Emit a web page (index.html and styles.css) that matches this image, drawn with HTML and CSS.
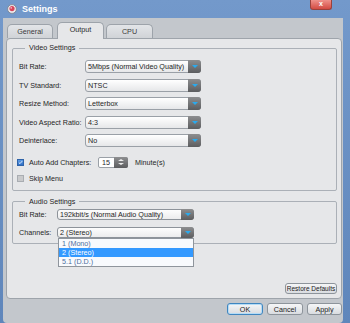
FILE: index.html
```html
<!DOCTYPE html>
<html lang="en">
  <head>
    <meta charset="UTF-8" />
    <title>Settings</title>
    <link rel="stylesheet" href="styles.css">
  </head>
  <body>
    <div class="titlebar">
      <svg class="app-icon" viewBox="0 0 10 10">
        <circle cx="5" cy="5" r="4.4" fill="#ececef" stroke="#7b808a" stroke-width="0.8" />
        <circle cx="5" cy="4.6" r="2.6" fill="#d8445a" />
        <circle cx="4.2" cy="3.8" r="0.9" fill="#f5b6c0" />
      </svg>
      <span class="title">Settings</span>
      <div class="close-btn">x</div>
    </div>

    <div class="window">
      <!-- Pestañas -->
      <div class="tabs">
        <div class="tab first">General</div>
        <div class="tab active">Output</div>
        <div class="tab">CPU</div>
      </div>

      <div class="panel">
        <fieldset class="group">
          <legend>Video Settings</legend>
          <div class="rows">
            <div class="row">
              <span class="label">Bit Rate:</span>
              <div class="combo"><span class="value">5Mbps (Normal Video Quality)</span><span class="drop"></span></div>
            </div>
            <div class="row">
              <span class="label">TV Standard:</span>
              <div class="combo"><span class="value">NTSC</span><span class="drop"></span></div>
            </div>
            <div class="row">
              <span class="label">Resize Method:</span>
              <div class="combo"><span class="value">Letterbox</span><span class="drop"></span></div>
            </div>
            <div class="row">
              <span class="label">Video Aspect Ratio:</span>
              <div class="combo"><span class="value">4:3</span><span class="drop"></span></div>
            </div>
            <div class="row">
              <span class="label">Deinterlace:</span>
              <div class="combo"><span class="value">No</span><span class="drop"></span></div>
            </div>
          </div>
          <div class="row chapters-row">
            <span class="check on">
              <svg viewBox="0 0 7 7"><path d="M1.2 3.6 L2.8 5.1 L5.8 1.6" fill="none" stroke="#fff" stroke-width="1.2" /></svg>
            </span>
            <span class="check-label">Auto Add Chapters:</span>
            <div class="spin">
              <span class="spin-value">15</span>
              <span class="spin-btn"><i class="up"></i><i class="down"></i></span>
            </div>
            <span class="unit">Minute(s)</span>
          </div>
          <div class="row skip-row">
            <span class="check off"></span>
            <span>Skip Menu</span>
          </div>
        </fieldset>

        <fieldset class="group audio">
          <legend>Audio Settings</legend>
          <div class="rows audio-rows">
            <div class="row">
              <span class="label short">Bit Rate:</span>
              <div class="combo light"><span class="value">192kbit/s (Normal Audio Quality)</span><span class="drop"></span></div>
            </div>
            <div class="row">
              <span class="label short">Channels:</span>
              <div class="combo light open">
                <span class="value">2 (Stereo)</span><span class="drop"></span>
                <ul class="dropdown">
                  <li>1 (Mono)</li>
                  <li class="hover">2 (Stereo)</li>
                  <li>5.1 (D.D.)</li>
                </ul>
              </div>
            </div>
          </div>
        </fieldset>

        <div class="panel-foot">
          <button class="btn restore">Restore Defaults</button>
        </div>
      </div>

      <!-- Botones -->
      <div class="footer">
        <button class="btn default">OK</button>
        <button class="btn">Cancel</button>
        <button class="btn apply">Apply</button>
      </div>
    </div>
  </body>
</html>
```

FILE: styles.css
```css
/* General */
* {
  box-sizing: border-box;
}

body {
  margin: 0;
  width: 350px;
  height: 323px;
  overflow: hidden;
  background: linear-gradient(#7399cb, #5f86bb);
  font-family: "Liberation Sans", Arial, sans-serif;
  font-size: 7.2px;
  color: #1f1f1f;
}

/* Barra de título */
.titlebar {
  height: 18px;
  display: flex;
  align-items: center;
  padding-left: 7px;
}

.app-icon {
  width: 10px;
  height: 10px;
  margin-right: 5px;
}

.title {
  color: #fff;
  font-weight: bold;
  font-size: 9px;
}

.close-btn {
  align-self: flex-start;
  margin-left: auto;
  margin-right: 18px;
  width: 22px;
  height: 10px;
  border: 1px solid #9a423c;
  border-top: none;
  border-radius: 0 0 3px 3px;
  background: linear-gradient(#ef918a, #d34b42);
  color: #fff;
  font-weight: bold;
  font-size: 7px;
  line-height: 8px;
  text-align: center;
}

/* Ventana */
.window {
  margin-left: 3px;
  width: 340px;
  height: 305px;
  padding-top: 4px;
  background: #c3c7cc;
  border-radius: 0 0 4px 4px;
  display: flex;
  flex-direction: column;
}

/* Pestañas */
.tabs {
  display: flex;
  align-items: flex-end;
  height: 17px;
  padding-left: 4px;
  margin-bottom: -1px;
}

.tab {
  width: 47px;
  height: 14px;
  margin-right: 2px;
  margin-bottom: 1px;
  border: 1px solid #9da3aa;
  border-bottom: none;
  border-radius: 5px 5px 0 0;
  background: linear-gradient(#e3e5e8, #d0d3d7);
  text-align: center;
  line-height: 14px;
  color: #3a3a3a;
}

.tab.first {
  width: 46px;
  margin-right: 4px;
}

.tab.active {
  position: relative;
  z-index: 1;
  height: 17px;
  margin-bottom: 0;
  background: #e6e7e9;
  color: #2a2a2a;
}

/* Panel */
.panel {
  margin-left: 3px;
  width: 336px;
  height: 261px;
  padding: 4px 4px 4px 5px;
  border: 1px solid #9ea4ab;
  border-radius: 4px;
  background: #e6e7e9;
  display: flex;
  flex-direction: column;
}

.group {
  margin: 0;
  min-width: 0;
  padding: 7px 6px 5px;
  border: 1px solid #abb0b7;
  border-radius: 2px;
}

.group legend {
  margin-left: 6px;
  padding: 0 4px;
  line-height: 10px;
}

.group.audio {
  margin-top: 6px;
  padding-top: 2px;
}

.rows {
  display: flex;
  flex-direction: column;
  gap: 5.5px;
}

.audio-rows {
  gap: 7px;
}

.row {
  display: flex;
  align-items: center;
  height: 13px;
}

.audio-rows .row {
  height: 11px;
}

.label {
  width: 66px;
}

.label.short {
  width: 38px;
}

/* Desplegables */
.combo {
  display: flex;
  width: 116px;
  height: 13px;
  border: 1px solid #9aa0a7;
  border-radius: 3px;
  background: linear-gradient(#fff, #e6e7e9);
}

.combo .value {
  flex: 1;
  padding-left: 2px;
  line-height: 11px;
  white-space: nowrap;
  overflow: hidden;
}

.combo.light {
  width: 137px;
  height: 11px;
  border-color: #8d939a;
  background: linear-gradient(#fdfdfd, #ececed);
}

.combo.light .value {
  line-height: 9px;
}

.drop {
  width: 13px;
  margin: -1px -1px -1px 0;
  border-radius: 0 3px 3px 0;
  background: linear-gradient(#8d8e90, #5c5d5f);
  display: flex;
  align-items: center;
  justify-content: center;
}

.drop::after {
  content: "";
  border-left: 3px solid transparent;
  border-right: 3px solid transparent;
  border-top: 3px solid #29aaee;
}

.combo.open {
  position: relative;
}

.dropdown {
  position: absolute;
  top: 100%;
  left: 0;
  right: -1px;
  margin: 1px 0 0;
  padding: 0;
  list-style: none;
  background: #f8fafd;
  border: 1px solid #8f959c;
  color: #4f6f9e;
}

.dropdown li {
  height: 9px;
  padding-left: 3px;
  line-height: 9px;
}

.dropdown li.hover {
  background: #3399ff;
  color: #fff;
}

/* Casillas */
.chapters-row {
  margin-top: 8.5px;
}

.skip-row {
  height: 12px;
  margin-top: 4px;
}

.check {
  width: 7px;
  height: 7px;
  margin-left: -2px;
  margin-right: 5px;
  border: 1px solid #8a8f96;
  display: flex;
}

.check svg {
  width: 100%;
  height: 100%;
}

.check.on {
  border-color: #2f63a8;
  background: linear-gradient(#5b9be6, #2f6fc6);
}

.check.off {
  border-color: #a9adb2;
  background: #c9cacc;
}

.check-label {
  width: 69px;
}

.spin {
  display: flex;
  width: 30px;
  height: 11px;
  border: 1px solid #9aa0a7;
  border-radius: 2px;
  background: #fff;
}

.spin-value {
  flex: 1;
  padding-left: 3px;
  line-height: 9px;
}

.spin-btn {
  width: 14px;
  margin: -1px -1px -1px 0;
  border-radius: 0 2px 2px 0;
  background: linear-gradient(#8d8e90, #5c5d5f);
  display: flex;
  flex-direction: column;
  align-items: center;
  justify-content: center;
  gap: 2px;
}

.spin-btn i {
  border-left: 3px solid transparent;
  border-right: 3px solid transparent;
}

.spin-btn .up {
  border-bottom: 2px solid #eee;
}

.spin-btn .down {
  border-top: 2px solid #eee;
}

.unit {
  margin-left: 7px;
}

/* Botones */
.panel-foot {
  margin-top: auto;
  display: flex;
  justify-content: flex-end;
}

.btn {
  height: 12px;
  width: 36px;
  padding: 0;
  font: inherit;
  color: #222;
  border: 1px solid #8d949b;
  border-radius: 3px;
  background: linear-gradient(#f5f6f7, #d9dce0);
}

.btn.restore {
  width: 52px;
  height: 11px;
  font-size: 6.5px;
}

.btn.default {
  border-color: #3f86c0;
  box-shadow: inset 0 0 0 1px #b5dcf6;
}

.btn.apply {
  width: 35px;
}

.footer {
  display: flex;
  justify-content: flex-end;
  gap: 4px;
  padding: 4px 1px 0 0;
}
```
